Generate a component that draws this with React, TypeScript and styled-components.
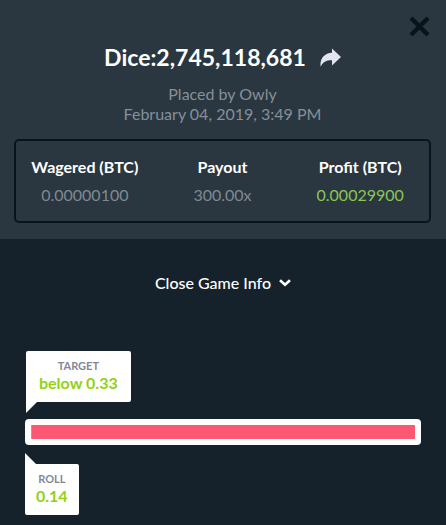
import React from "react";
import styled, { createGlobalStyle } from "styled-components";

const GlobalStyle = createGlobalStyle`
  *, *::before, *::after { box-sizing: border-box; }
  body {
    margin: 0;
    background: #15222c;
    color: #fff;
    font-family: Lato, "Liberation Sans", sans-serif;
    font-size: 16px;
    line-height: 20px;
  }
  h1, p, dl, dt, dd { margin: 0; }
  button { border: 0; padding: 0; background: none; color: inherit; font: inherit; cursor: pointer; }
  svg { display: block; }
`;

const Summary = styled.header`
  position: relative;
  padding: 42px 15px 16px 14px;
  background: #2a3740;
  text-align: center;
`;

const CloseButton = styled.button`
  position: absolute;
  top: 16px;
  right: 16px;
`;

const TitleRow = styled.div`
  display: flex;
  justify-content: center;
  align-items: center;
  gap: 14px;
`;

const Title = styled.h1`
  font-size: 23px;
  line-height: 30px;
  font-weight: 700;
`;

const Meta = styled.p`
  margin: 12px 0 15px;
  color: #868f99;
`;

const Stats = styled.dl`
  display: grid;
  grid-template-columns: repeat(3, 1fr);
  padding: 16px 0;
  border: 2px solid #09141a;
  border-radius: 5px;
`;

const StatLabel = styled.dt`
  margin-bottom: 8px;
  font-weight: 700;
`;

const StatValue = styled.dd<{ $win?: boolean }>`
  color: ${(p) => (p.$win ? "#8bc653" : "#7f8993")};
`;

const Game = styled.main`
  display: flex;
  flex-direction: column;
  align-items: flex-start;
  padding: 34px 25px 10px;
`;

const ToggleButton = styled.button`
  display: flex;
  align-items: center;
  align-self: center;
  gap: 8px;
  margin-bottom: 58px;
  font-weight: 500;
`;

const Callout = styled.div<{ $side: "above" | "below" }>`
  position: relative;
  border-radius: 2px;
  background: #fff;
  text-align: center;
  ${(p) =>
    p.$side === "above"
      ? "margin: 0 0 17px 1px; padding: 7px 13px 9px;"
      : "margin-top: 19px; padding: 7px 11px 9px;"}

  &::after {
    content: "";
    position: absolute;
    left: 0;
    width: 13px;
    height: 13px;
    background: #fff;
    ${(p) =>
      p.$side === "above"
        ? "top: calc(100% - 2px); clip-path: polygon(0 0, 100% 0, 0 100%);"
        : "bottom: calc(100% - 2px); clip-path: polygon(0 0, 100% 100%, 0 100%);"}
  }
`;

const CalloutLabel = styled.div`
  color: #7f8999;
  font-size: 11px;
  line-height: 15px;
  font-weight: 700;
`;

const CalloutValue = styled.div`
  color: #8fd313;
  font-weight: 700;
`;

const Track = styled.div`
  width: 100%;
  padding: 6px;
  border-radius: 4px;
  background: #fff;
`;

const Range = styled.div`
  display: flex;
  height: 14px;
  border-radius: 1px;
  overflow: hidden;
  background: #fc5873;
`;

const WinRange = styled.div`
  min-width: 1px;
  background: #b5ab4a;
`;

const stats = [
  { label: "Wagered (BTC)", value: "0.00000100" },
  { label: "Payout", value: "300.00x" },
  { label: "Profit (BTC)", value: "0.00029900", win: true },
];

const target = 0.33;
const roll = 0.14;

export default function App() {
  return (
    <>
      <GlobalStyle />
      <Summary>
        <CloseButton aria-label="Close">
          <svg width="21" height="21" viewBox="0 0 21 21" stroke="#09141a" strokeWidth="4.4">
            <path d="M2 2L19 19M19 2L2 19" />
          </svg>
        </CloseButton>
        <TitleRow>
          <Title>Dice:2,745,118,681</Title>
          <button aria-label="Share">
            <svg width="21" height="19" viewBox="0 0 21 19" fill="#e2e4f0">
              <path d="M12 .5L21 9L12 17.5V12.3C6.5 12.2 3 13.8.6 18.8C-.4 11 4 5.2 12 4.8Z" />
            </svg>
          </button>
        </TitleRow>
        <Meta>
          Placed by Owly
          <br />
          February 04, 2019, 3:49 PM
        </Meta>
        <Stats>
          {stats.map((s) => (
            <div key={s.label}>
              <StatLabel>{s.label}</StatLabel>
              <StatValue $win={s.win}>{s.value}</StatValue>
            </div>
          ))}
        </Stats>
      </Summary>
      <Game>
        <ToggleButton aria-expanded="true">
          Close Game Info
          <svg width="12" height="8" viewBox="0 0 12 8" fill="none" stroke="#fff" strokeWidth="2.6">
            <path d="M1 1.3L6 5.8L11 1.3" />
          </svg>
        </ToggleButton>
        <Callout $side="above">
          <CalloutLabel>TARGET</CalloutLabel>
          <CalloutValue>below {target}</CalloutValue>
        </Callout>
        <Track>
          <Range>
            <WinRange style={{ width: `${target}%` }} />
          </Range>
        </Track>
        <Callout $side="below">
          <CalloutLabel>ROLL</CalloutLabel>
          <CalloutValue>{roll}</CalloutValue>
        </Callout>
      </Game>
    </>
  );
}
